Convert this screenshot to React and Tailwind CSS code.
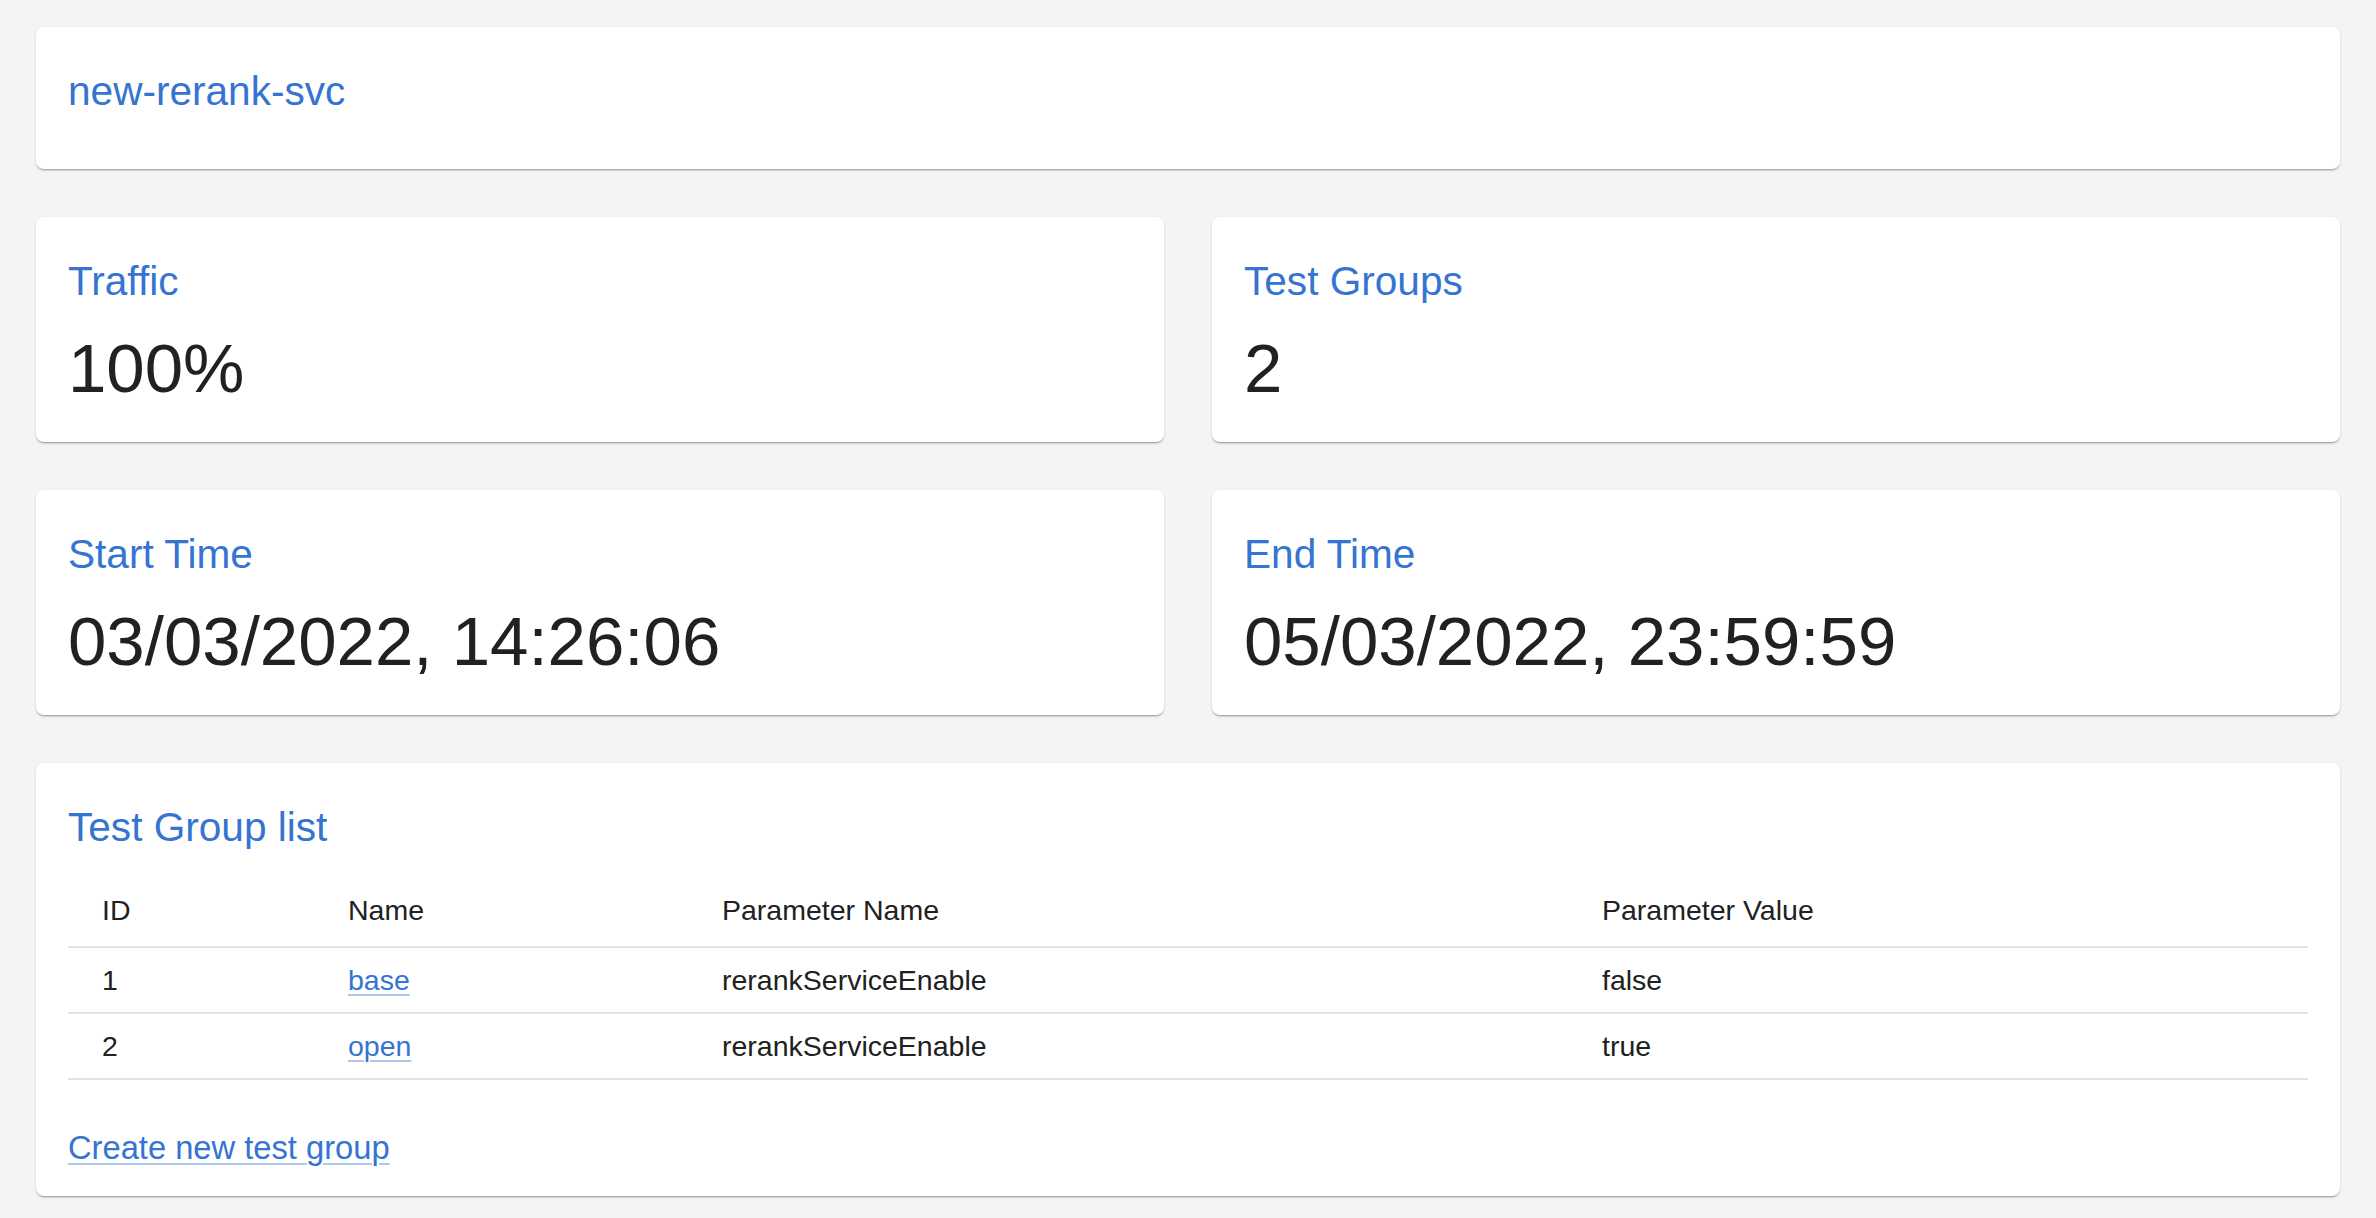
import React from "react";

const card =
  "bg-white rounded-lg shadow-[0_2px_2px_-1px_rgba(0,0,0,0.32),0_1px_3px_0_rgba(0,0,0,0.12)] p-8";
const title =
  "text-[40.6px] leading-[64px] mb-[14px] text-[#3574d0] font-normal";
const value = "text-[69px] leading-[83px] text-[#212121]";

function StatCard({ label, val }) {
  return (
    <div className={card}>
      <div className={title}>{label}</div>
      <div className={value}>{val}</div>
    </div>
  );
}

const rows = [
  { id: 1, name: "base", param: "rerankServiceEnable", value: "false" },
  { id: 2, name: "open", param: "rerankServiceEnable", value: "true" },
];

const gridCols = "grid grid-cols-[246px_374px_880px_1fr]";

export default function App() {
  return (
    <div
      className="min-h-screen bg-[#f4f4f4] pt-[27px] pb-[21px] px-9 flex flex-col gap-12"
      style={{ fontFamily: '"Liberation Sans", Arial, Helvetica, sans-serif' }}
    >
      <div className={card}>
        <div className={title}>new-rerank-svc</div>
      </div>

      <div className="grid grid-cols-2 gap-x-12 gap-y-12">
        <StatCard label="Traffic" val="100%" />
        <StatCard label="Test Groups" val="2" />
        <StatCard label="Start Time" val="03/03/2022, 14:26:06" />
        <StatCard label="End Time" val="05/03/2022, 23:59:59" />
      </div>

      <div className={card}>
        <div className={title}>Test Group list</div>
        <div className="text-[28.5px] text-[#212121]">
          <div className={`${gridCols} h-[75px] pt-[2px] items-center border-b-2 border-[#e3e3e3]`}>
            <div className="pl-[34px]">ID</div>
            <div className="pl-[34px]">Name</div>
            <div className="pl-[34px]">Parameter Name</div>
            <div className="pl-[34px]">Parameter Value</div>
          </div>
          {rows.map((r) => (
            <div
              key={r.id}
              className={`${gridCols} h-[66px] items-center border-b-2 border-[#e3e3e3]`}
            >
              <div className="pl-[34px]">{r.id}</div>
              <div className="pl-[34px]">
                <a
                  href="#"
                  className="text-[#3574d0] underline decoration-2 decoration-[rgba(53,116,208,0.4)] underline-offset-[4px]"
                >
                  {r.name}
                </a>
              </div>
              <div className="pl-[34px]">{r.param}</div>
              <div className="pl-[34px]">{r.value}</div>
            </div>
          ))}
        </div>
        <div className="mt-[52px] text-[32.7px] leading-[32px]">
          <a
            href="#"
            className="text-[#3574d0] underline decoration-2 decoration-[rgba(53,116,208,0.4)] underline-offset-[4px]"
          >
            Create new test group
          </a>
        </div>
      </div>
    </div>
  );
}
